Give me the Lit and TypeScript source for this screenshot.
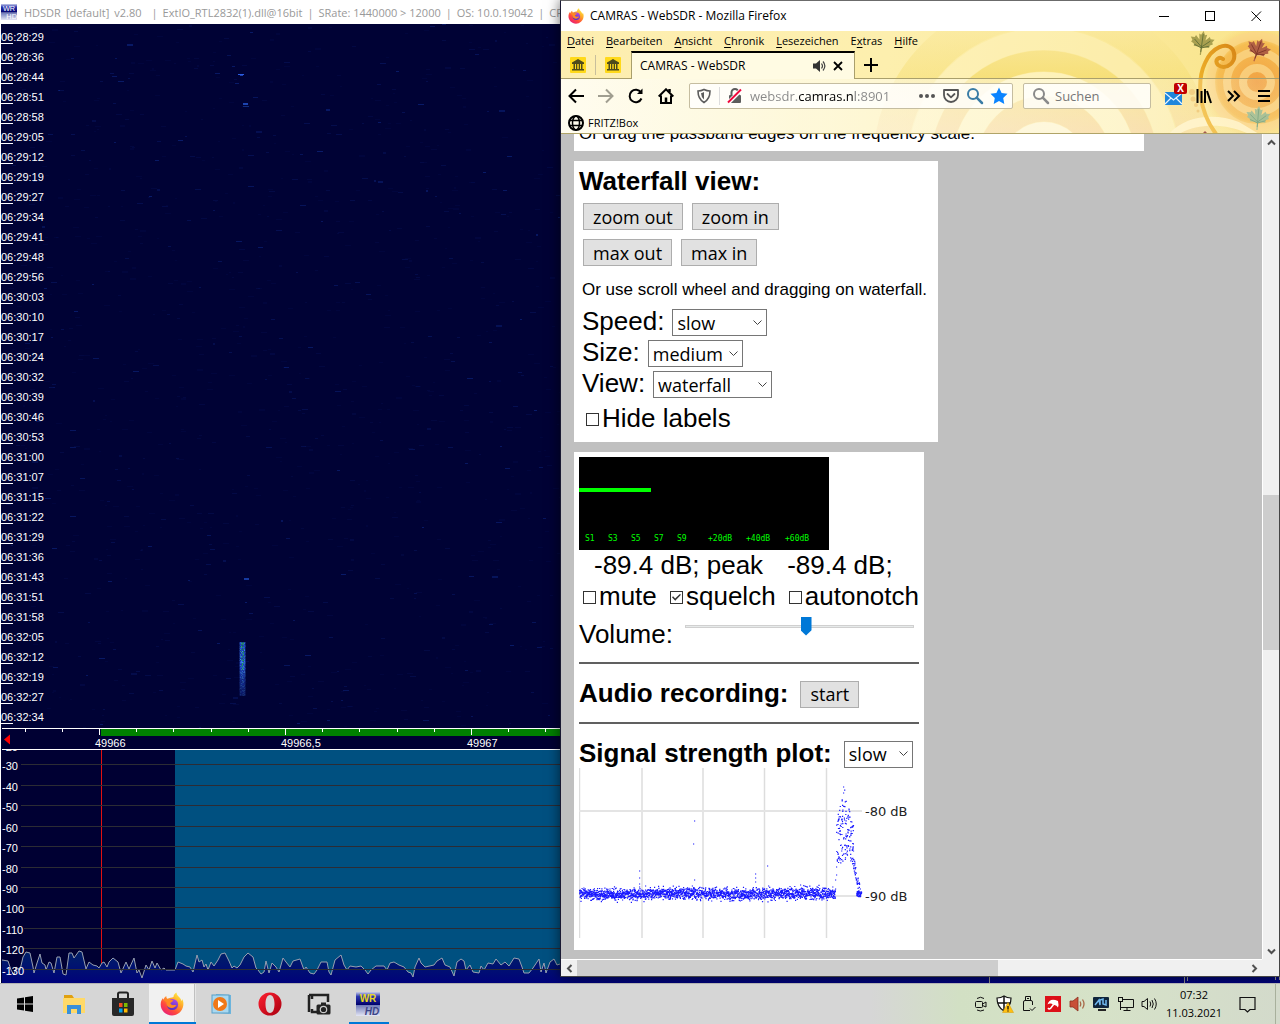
import { LitElement, html, svg, css } from "lit";
import { customElement } from "lit/decorators.js";

/** Small repeatable generator, so that the noise looks the same on each load. */
function seeded(seed: number) {
  let s = seed;
  return () => {
    s = (s * 1664525 + 1013904223) >>> 0;
    return s / 4294967296;
  };
}

const hdLogo = (size: number) => html`
  <svg width=${size} height=${size} viewBox="0 0 24 24" aria-hidden="true">
    <defs>
      <linearGradient id="hdTop" x1="0" y1="0" x2="0" y2="1">
        <stop offset="0" stop-color="#c8cde8" /><stop offset="0.35" stop-color="#2a35b0" /><stop offset="1" stop-color="#00006a" />
      </linearGradient>
      <linearGradient id="hdLow" x1="0" y1="0" x2="0" y2="1">
        <stop offset="0" stop-color="#6d78b8" /><stop offset="1" stop-color="#e4e6f4" />
      </linearGradient>
    </defs>
    <rect width="24" height="13" fill="url(#hdTop)" />
    <rect y="13" width="24" height="11" fill="url(#hdLow)" />
    <text x="12" y="10" text-anchor="middle" font-family="Liberation Sans, sans-serif" font-weight="bold" font-size="10" fill="#e8d820">WR</text>
    <text x="16" y="23" text-anchor="middle" font-family="Liberation Sans, sans-serif" font-weight="bold" font-style="italic" font-size="10" fill="#3c4488">HD</text>
  </svg>`;

const foxLogo = (size: number) => html`
  <svg width=${size} height=${size} viewBox="0 0 24 24" aria-hidden="true">
    <defs>
      <linearGradient id="foxBody" x1="0.85" y1="0.05" x2="0.2" y2="0.95">
        <stop offset="0" stop-color="#fff14a" /><stop offset="0.35" stop-color="#ffa828" />
        <stop offset="0.7" stop-color="#ff4a3c" /><stop offset="1" stop-color="#e81e78" />
      </linearGradient>
      <linearGradient id="foxGlobe" x1="0.7" y1="0" x2="0.3" y2="1">
        <stop offset="0" stop-color="#b04ae8" /><stop offset="1" stop-color="#4a30c0" />
      </linearGradient>
    </defs>
    <path d="M13.5 5C13.5 3 15 1 16.5.5c0 2.5 2 3.700 3.500 5.500.8.900 1.300 2 1.500 3 .6-.6.700-1.500.600-2.300C23.300 9 23.700 11 23.300 13.500 22.500 19.300 17.600 23.500 12 23.500 5.600 23.500.700 18.400.700 12.500c0-2.800 1-5 2.300-6.500 0 .8.200 1.400.5 1.800C4 6.200 5 4.700 6.300 4c-.1 1.200.3 2.200 1 2.800 2-.9 4.300-1 6.200-1.800z" fill="url(#foxBody)" />
    <circle cx="12.500" cy="12.500" r="5.600" fill="url(#foxGlobe)" />
    <path d="M3.500 8c2-1.500 4.500-1.300 6.500 0 1 .2 2.500 0 3.300.3-.3 1.500-2 1.900-3 2.700.3 1.700 2 2.500 4 2 1-.2 2 0 2.300.5-1.300.9-2.300 2.600-5 2.500-3.500-.1-5.500-2.800-5-5.500z" fill="#ff8a22" />
  </svg>`;

const glass = html`
  <svg width="18" height="18" viewBox="0 0 18 18" fill="none" stroke="currentColor" stroke-width="2" aria-hidden="true">
    <circle cx="7" cy="7" r="5" /><path d="M10.700 10.700 16 16" stroke-width="2.500" stroke-linecap="round" />
  </svg>`;

const museum = html`
  <svg width="16" height="16" viewBox="0 0 16 16" aria-hidden="true">
    <rect width="16" height="16" rx="1" fill="#ffd91a" />
    <path d="M8 2 14 5.500V7H2V5.500zM3.500 7h1.500v5H3.500zM6 7h1.300v5H6zM8.700 7H10v5H8.700zM11 7h1.500v5H11zM2 12h12v1.500H2z" fill="#4d4a1c" />
  </svg>`;

const MAPLE = "M0-12 2-8 4-9 3-3 7-7 8-5 12-5 10-2 11 0 7 2 8 4 3 4 .6 5V12H-.6V5L-3 4-8 4-7 2-11 0-10-2-12-5-8-5-7-7-3-3-4-9-2-8z";

const selectBox = (id: string, size: string, options: string[]) => html`
  <span class="select ${size}">
    <select id=${id}>${options.map((o) => html`<option>${o}</option>`)}</select>
    <svg width="9" height="6" viewBox="0 0 9 6" fill="none" stroke="#444" aria-hidden="true"><path d="M.5.5 4.500 4.500 8.500.5" /></svg>
  </span>`;

/* ------------------------------------------------------------------ */

const TIMES = (
  "28:29 28:36 28:44 28:51 28:58 29:05 29:12 29:19 29:27 29:34 29:41 29:48 29:56 30:03 30:10 30:17 30:24 30:32 " +
  "30:39 30:46 30:53 31:00 31:07 31:15 31:22 31:29 31:36 31:43 31:51 31:58 32:05 32:12 32:19 32:27 32:34"
).split(" ");

/** Spectrum trace: x, and height of the trace in the plot. */
const TRACE: number[][] = [
  [2, 140], [8, 141], [11, 150], [14, 155], [16, 147], [20, 150], [23, 137], [26, 132], [30, 133], [33, 147], [34, 153],
  [37, 143], [40, 134], [42, 143], [45, 145], [46, 150], [49, 142], [51, 143], [54, 153], [57, 137], [60, 137], [63, 154],
  [66, 155], [69, 133], [72, 133], [74, 138], [79, 131], [82, 132], [86, 149], [89, 142], [93, 145], [97, 146], [99, 148],
  [102, 143], [104, 142], [107, 147], [109, 142], [113, 138], [118, 142], [121, 153], [126, 142], [129, 149], [134, 138],
  [137, 153], [139, 150], [142, 158], [146, 145], [149, 150], [152, 141], [155, 148], [157, 143], [161, 150], [164, 148],
  [166, 150], [175, 150], [178, 142], [183, 144], [186, 146], [190, 147], [193, 152], [197, 135], [199, 142], [202, 140],
  [204, 147], [206, 144], [208, 150], [211, 142], [214, 146], [218, 140], [221, 134], [225, 133], [229, 141], [232, 148],
  [234, 146], [237, 148], [240, 145], [244, 137], [248, 133], [253, 137], [256, 148], [258, 150], [261, 154], [264, 152],
  [266, 141], [269, 153], [272, 143], [276, 147], [279, 152], [283, 138], [286, 142], [290, 147], [293, 141], [300, 139],
  [304, 150], [306, 147], [310, 153], [314, 154], [317, 150], [321, 142], [327, 142], [329, 152], [331, 155], [335, 140],
  [341, 135], [344, 145], [347, 150], [350, 146], [356, 147], [361, 146], [365, 150], [368, 154], [371, 150], [376, 146],
  [384, 146], [387, 150], [390, 143], [394, 142], [399, 145], [404, 147], [408, 152], [411, 153], [413, 157], [415, 147],
  [419, 138], [421, 143], [425, 147], [434, 145], [437, 141], [442, 138], [445, 145], [450, 147], [454, 156], [457, 142],
  [461, 139], [464, 141], [466, 150], [470, 145], [473, 152], [479, 153], [481, 146], [484, 150], [488, 143], [493, 144],
  [496, 139], [501, 145], [505, 142], [509, 146], [514, 138], [519, 139], [522, 147], [524, 153], [529, 153], [533, 148],
  [539, 139], [541, 152], [544, 143], [546, 153], [550, 142], [554, 139], [557, 145], [560, 144], [600, 146], [3000, 146],
];

@customElement("sdr-window")
class SdrWindow extends LitElement {
  static styles = css`
    :host { display: flex; flex-direction: column; min-width: 0; min-height: 0; background: #000033; border-left: 1px solid #fff; }
    .title { display: flex; flex: none; align-items: center; gap: 5px; height: 24px; background: #fff; color: #999;
      font: 11px "Open Sans", "Noto Sans", sans-serif; white-space: nowrap; overflow: hidden; }
    .title svg { margin-right: 2px; }
    .part { padding-left: 5px; }
    .fall { flex: 1; display: grid; min-height: 0; background: #000235; overflow: hidden; }
    .fall > * { grid-area: 1 / 1; }
    .noise { width: 100%; height: 100%; }
    .times { margin: 0; padding: 6px 0 0; list-style: none; color: #fff;
      font: 11px/15px "Liberation Sans", Arial, sans-serif; }
    .times li { display: flex; height: 20px; }
    .hour { height: 13px; border-bottom: 1px solid #fff; }
    .scale, .spectrum { display: block; width: 100%; flex: none; }
    text { fill: #fff; font: 11px "Liberation Sans", Arial, sans-serif; }
  `;

  private noise() {
    const rnd = seeded(77);
    const dashes = [];
    for (let i = 0; i < 2600; i++) {
      const bright = Math.pow(rnd(), 6);
      dashes.push(svg`<rect x=${Math.floor(rnd() * 1280)} y=${Math.floor(rnd() * 704)} width=${2 + Math.floor(rnd() * 5)}
        height=${rnd() > 0.9 ? 2 : 1} fill="#1848c8" opacity=${(0.06 + bright * 0.3).toFixed(2)} />`);
    }
    return dashes;
  }

  private burst() {
    const rnd = seeded(5);
    const cells = [];
    for (let y = 0; y < 54; y += 1) {
      const strength = y < 28 ? 1 : 0.8 - (y - 28) / 55;
      for (let x = 0; x < 7; x++) {
        const green = x > 1 && x < 5 && y < 28 && rnd() > 0.55;
        const edge = x === 0 || x === 6 ? 0.4 : 1;
        cells.push(svg`<rect x=${238 + x} y=${618 + y} width="1" height="1" fill=${green ? "#28b068" : rnd() > 0.6 ? "#4088f0" : "#2450d8"}
          opacity=${(strength * edge * (0.65 + rnd() * 0.35)).toFixed(2)} />`);
      }
    }
    return cells;
  }

  private ticks() {
    const marks = [];
    for (let i = -2; i < 32; i++) {
      const x = Math.round(98 + i * 37.2);
      marks.push(svg`<rect x=${x} y="1" width="1" height=${i % 5 === 0 ? 6 : 3} fill="#fff" />`);
    }
    return marks;
  }

  render() {
    const line = TRACE.map(([x, y]) => `${x - 1},${y}`).join(" ");
    return html`
      <header class="title">
        ${hdLogo(16)}<span>HDSDR</span><span>[default]</span><span>v2.80</span><span class="part">|</span><span>ExtIO_RTL2832(1).dll@16bit</span>
        <span>|</span><span>SRate: 1440000 &gt; 12000</span><span>|</span><span>OS: 10.0.19042</span><span>|</span><span>CPU</span>
      </header>
      <div class="fall">
        <svg class="noise" aria-hidden="true">
          ${this.noise()}${this.burst()}
          <rect x="237" y="50" width="6" height="1" fill="#2c5ce0" /><rect x="239" y="51" width="3" height="1" fill="#1c40b0" />
          <rect x="242" y="79" width="5" height="2" fill="#1c44b0" /><rect x="242" y="82" width="6" height="1" fill="#102c80" />
          <rect x="243" y="554" width="5" height="2" fill="#163aa0" />
        </svg>
        <ul class="times">${TIMES.map((t) => html`<li><span class="hour">06</span>:${t}</li>`)}</ul>
      </div>
      <svg class="scale" height="22" aria-label="Frequency scale in kHz">
        <rect x="100" y="1" width="100%" height="7" fill="#008000" />
        <rect x="1" width="100%" height="1" fill="#fff" /><rect x="1" y="21" width="100%" height="1" fill="#fff" />
        ${this.ticks()}
        <path d="M3 11.500 9 6.500V16.500z" fill="#f00" />
        <text x="94" y="19">49966</text><text x="280" y="19">49966,5</text><text x="466" y="19">49967</text>
      </svg>
      <svg class="spectrum" height="233" aria-label="Spectrum in dB">
        <defs>
          <linearGradient id="under" gradientUnits="userSpaceOnUse" x1="0" y1="130" x2="0" y2="165">
            <stop offset="0" stop-color="#002266" /><stop offset="1" stop-color="#00007c" />
          </linearGradient>
        </defs>
        <g>
          <rect x="174" width="100%" height="100%" fill="#005080" />
          <rect x="100" width="1" height="213" fill="#e01010" />
        </g>
        <g transform="translate(0 70)">
          <polygon points="1,170 ${line} 2999,170" fill="url(#under)" />
          <polyline points=${line} fill="none" stroke="#98a0b0" stroke-width="1" />
        </g>
        ${[14, 35, 55, 76, 96, 117, 137, 157, 178, 198, 219].map(
          (y, i) => svg`<rect x=${i < 7 ? 20 : 23} y=${y} width="100%" height="1" fill="#2c2c34" /><text x="1" y=${y + 6}>-${30 + i * 10}</text>`
        )}
        <text x="1" y="1">-20</text>
        <path d="M988.500 226V233M1183.500 227V233M1186.500 227V231M1274.500 227V230M1278.500 227V230" stroke="#909090" />
      </svg>`;
  }
}

/* ------------------------------------------------------------------ */

@customElement("receiver-page")
class ReceiverPage extends LitElement {
  static styles = css`
    :host { display: flex; flex-direction: column; align-items: flex-start; gap: 10px; min-width: 0; overflow: hidden;
      padding-left: 13px; background: #c0c0c0; color: #000; font: 26px/30px "Liberation Sans", Arial, sans-serif; }
    .panel { box-sizing: border-box; background: #fff; padding: 5px; white-space: nowrap; }
    .tail { width: 570px; max-width: 90%; margin-top: -18px; font-size: 17px; line-height: 25px; }
    .view { width: 364px; padding-bottom: 9px; }
    .audio { width: 350px; padding-bottom: 12px; }
    h2 { margin: 0; font-size: 26px; line-height: 30px; }
    .stack { display: flex; flex-direction: column; gap: 9px; padding: 7px 0 0 4px; }
    .buttons { display: flex; gap: 9px; }
    button, select { box-sizing: border-box; height: 27px; font: 18px/24px "Open Sans", "Noto Sans", sans-serif; color: #000; }
    button { padding: 0 9px; border: 1px solid #adadad; background: #e1e1e1; }
    .hint { margin: 14px 0 9px; padding-left: 3px; font-size: 17px; line-height: 20px; }
    .fields { display: flex; flex-direction: column; gap: 4px; padding-left: 3px; }
    .field { display: flex; gap: 8px; height: 27px; line-height: 25px; }
    .select { display: inline-grid; align-items: center; }
    .select > * { grid-area: 1 / 1; }
    .select svg { justify-self: end; margin-right: 5px; pointer-events: none; }
    select { appearance: none; width: 100%; border: 1px solid #767676; border-radius: 0; background: #fff; padding: 0 4px; }
    .w1 { width: 95px; } .w2 { width: 119px; } .w3 { width: 69px; }
    .check { display: inline-flex; align-items: center; gap: 3px; }
    input[type="checkbox"] { appearance: none; display: grid; place-items: center; width: 13px; height: 13px; margin: 4px 0 0;
      border: 1px solid #333; background: #fff; }
    input[type="checkbox"]:checked::before { content: ""; width: 9px; height: 7px; background: #333;
      clip-path: polygon(0 45%, 12% 32%, 35% 65%, 88% 0, 100% 12%, 36% 98%); }
    .labels { padding: 4px 0 0 7px; }
    .meter, .plot { display: block; }
    .reading { display: flex; gap: 24px; padding-left: 15px; height: 31px; }
    .checks { display: flex; justify-content: space-between; padding-left: 4px; height: 36px; align-items: flex-start; }
    .volume { display: flex; gap: 12px; line-height: 34px; align-items: flex-start; height: 45px; }
    .volume input { appearance: none; flex: 1; height: 19px; margin: 0 5px 0 0; background: none; }
    .volume input::-webkit-slider-runnable-track { height: 3px; background: #e7eaea; outline: 1px solid #d0d0d0; outline-offset: -1px; }
    .volume input::-webkit-slider-thumb { appearance: none; width: 11px; height: 19px; margin-top: -8px; background: #0078d7;
      clip-path: polygon(0 0, 100% 0, 100% 72%, 50% 100%, 0 72%); }
    hr { margin: 0; border: 0; height: 2px; background: #606060; }
    .line { display: flex; gap: 12px; align-items: flex-start; }
    .record { padding: 17px 0 14px; }
    .strength { padding-top: 17px; }
    .line h2 { line-height: 25px; }
    .meter text { fill: #0f0; font: 8px "DejaVu Sans Mono", monospace; }
    .plot text { fill: #222; font: 13px "DejaVu Sans", Verdana, sans-serif; }
  `;

  private dots() {
    const rnd = seeded(9);
    let d = "";
    const dot = (x: number, y: number) => { d += `M${x.toFixed(1)} ${y.toFixed(1)}h1.200`; };
    for (let x = 0; x < 256; x += 0.12) dot(x, 126 + (rnd() + rnd() + rnd() + rnd() - 2) * 5 + Math.sin(x / 20) * 0.5);
    for (let i = 0; i < 150; i++) {
      const x = 257 + rnd() * 17;
      const mid = 1 - Math.abs(x - 265) / 9;
      dot(x, 95 - rnd() * (38 + mid * 36));
    }
    for (let i = 0; i < 50; i++) { const t = rnd(); dot(273 + t * 8, 90 + t * 36 + (rnd() - 0.5) * 12); }
    for (let i = 0; i < 40; i++) dot(277 + rnd() * 5, 126 + (rnd() - 0.5) * 6);
    for (const [x, y] of [[115, 53], [114, 76], [60, 103], [60, 110], [60, 116], [60, 119], [115, 112], [188, 98], [176, 106],
      [176, 110], [176, 114], [221, 117], [189, 118], [66, 118], [264, 19], [264, 25], [256, 112], [257, 107], [257, 99]]) dot(x, y);
    return d;
  }

  render() {
    return html`
      <section class="panel tail">Or drag the passband edges on the frequency scale.</section>
      <section class="panel view">
        <h2>Waterfall view:</h2>
        <div class="stack">
          <div class="buttons"><button>zoom out</button><button>zoom in</button></div>
          <div class="buttons"><button>max out</button><button>max in</button></div>
        </div>
        <p class="hint">Or use scroll wheel and dragging on waterfall.</p>
        <div class="fields">
          <div class="field"><label for="speed">Speed:</label>${selectBox("speed", "w1", ["slow", "medium", "fast"])}</div>
          <div class="field"><label for="size">Size:</label>${selectBox("size", "w1", ["medium", "small", "large"])}</div>
          <div class="field"><label for="view">View:</label>${selectBox("view", "w2", ["waterfall", "spectrum"])}</div>
        </div>
        <div class="labels"><label class="check"><input type="checkbox" />Hide labels</label></div>
      </section>
      <section class="panel audio">
        <svg class="meter" width="250" height="93" viewBox="0 0 250 93" aria-label="Signal meter">
          <rect width="250" height="93" /><rect y="31" width="72" height="4" fill="#0f0" />
          ${([["S1", 6], ["S3", 29], ["S5", 52], ["S7", 75], ["S9", 98], ["+20dB", 129], ["+40dB", 167], ["+60dB", 206]] as [string, number][]).map(
            ([t, x]) => svg`<text x=${x} y="84">${t}</text>`
          )}
        </svg>
        <div class="reading"><span>-89.4 dB; peak</span><span>-89.4 dB;</span></div>
        <div class="checks">
          <label class="check"><input type="checkbox" />mute</label>
          <label class="check"><input type="checkbox" checked />squelch</label>
          <label class="check"><input type="checkbox" />autonotch</label>
        </div>
        <div class="volume"><label for="volume">Volume:</label><input id="volume" type="range" min="0" max="100" value="53" /></div>
        <hr />
        <div class="line record"><h2>Audio recording:</h2><button>start</button></div>
        <hr />
        <div class="line strength"><h2><label for="rate">Signal strength plot:</label></h2>${selectBox("rate", "w3", ["slow", "fast"])}</div>
        <svg class="plot" width="340" height="170" viewBox="0 0 340 170" aria-label="Signal strength over time">
          <path d="M.5 0V170M63 0V170M124 0V170M185.500 0V170M247.500 0V170" stroke="#ddd" stroke-width="1.500" />
          <path d="M0 43H283M0 128H283" stroke="#e4e4e4" stroke-width="2" />
          <path d=${this.dots()} stroke="#1a1aff" stroke-width="1.200" />
          <text x="286" y="48">-80 dB</text><text x="286" y="133">-90 dB</text>
        </svg>
      </section>`;
  }
}

/* ------------------------------------------------------------------ */

@customElement("browser-window")
class BrowserWindow extends LitElement {
  static styles = css`
    :host { display: flex; flex-direction: column; box-sizing: border-box; background: #fff; border: 1px solid #444;
      border-top-color: #6b6b6b; border-left-color: #1a1a33; box-shadow: 0 0 12px rgba(0, 0, 0, 0.6);
      font: 11px/16px "Open Sans", "Noto Sans", sans-serif; color: #000; }
    button { display: grid; place-items: center; padding: 0; border: 0; background: none; color: inherit; font: inherit; }
    .title { display: flex; align-items: center; height: 30px; padding-left: 7px; }
    .title .name { flex: 1; padding-left: 6px; }
    .name { font-size: 12px; white-space: nowrap; }
    .title button { width: 46px; height: 28px; }
    .chrome { position: relative; overflow: hidden; height: 102px; border-bottom: 1px solid #b0a468;
      background: linear-gradient(100deg, #fdeeb0, #fdefae 45%, #f9e48a); }
    .art { position: absolute; top: 0; right: 0; }
    .rows { position: relative; }
    .menu { display: flex; gap: 12px; height: 20px; padding-left: 6px; align-items: center; }
    .menu a { color: #000; text-decoration: none; }
    u { text-underline-offset: 2px; }
    .tabs { display: flex; height: 28px; }
    .pin, .rest { box-sizing: border-box; border-bottom: 1px solid #a99f6c; }
    .pin { width: 35px; display: flex; align-items: center; justify-content: space-between; padding-left: 9px; }
    .bar { width: 1px; height: 20px; background: #c8bf9c; }
    .tab { box-sizing: border-box; width: 224px; display: flex; align-items: center; gap: 4px; padding: 0 10px 0 8px;
      border: 1px solid #a99f6c; border-width: 0 1px; border-top: 2px solid #000; background: rgba(255, 254, 240, 0.8); }
    .tab .name { flex: 1; }
    .rest { flex: 1; padding-left: 6px; display: flex; align-items: center; }
    .rest button { width: 20px; height: 20px; }
    .lower { background: linear-gradient(90deg, rgba(255, 255, 250, 0.85), rgba(255, 253, 240, 0.55) 45%, rgba(255, 255, 255, 0.3) 80%, rgba(255, 255, 255, 0.1)); }
    .nav { display: flex; align-items: center; height: 34px; }
    .nav > button { width: 30px; height: 30px; }
    .url, .search { box-sizing: border-box; display: flex; align-items: center; height: 26px; border: 1px solid #c5bda0;
      border-radius: 2px; background: rgba(255, 255, 255, 0.8); }
    .url { flex: 1; margin: 0 10px 0 8px; padding: 0 4px 0 5px; gap: 6px; color: #5c5c5c; min-width: 0; }
    .url .bar { background: #ddd; height: 18px; }
    input { flex: 1; min-width: 0; border: 0; padding: 0; outline: 0; font: 13px/20px "Open Sans", "Noto Sans", sans-serif; background: none; }
    .address { color: transparent; background: linear-gradient(90deg, #888 48px, #000 48px 105px, #888 105px); background-clip: text; -webkit-background-clip: text; }
    .search { width: 128px; padding: 0 8px; gap: 5px; margin-right: 8px; color: #8a8a8a; }
    input::placeholder { color: #777; opacity: 1; }
    .blue { display: flex; color: #3a7ca5; }
    .marks { display: flex; align-items: center; gap: 4px; height: 20px; padding-left: 7px; }
    .mark { display: flex; align-items: center; gap: 4px; color: #000; text-decoration: none; }
    .body { flex: 1; min-height: 0; display: grid; grid-template: minmax(0, 1fr) 17px / minmax(0, 1fr) 17px; background: #f0f0f0; }
    .vbar, .hbar { display: flex; color: #505050; }
    .vbar { flex-direction: column; border-left: 1px solid #fff; }
    .hbar { border-top: 1px solid #fff; }
    .vbar button, .hbar button { width: 16px; height: 16px; }
    .thumb { background: #cdcdcd; }
    .vbar .before { flex: 345; } .vbar .thumb { flex: 155; } .vbar .after { flex: 293; }
    .hbar .thumb { flex: 420; } .hbar .after { flex: 248; }
  `;

  private leaf(x: number, y: number, turn: number, scale: number, fill: string, vein: string) {
    return svg`<g transform="translate(${x} ${y}) rotate(${turn}) scale(${scale})">
      <path d=${MAPLE} fill=${fill} /><path d="M0 9V-9M0 4 8-3M0 4-8-3M0 5 8 2M0 5-8 2" stroke=${vein} stroke-width="0.800" fill="none" /></g>`;
  }

  private art() {
    return html`
      <svg class="art" width="719" height="103" viewBox="561 31 719 103" aria-hidden="true">
        <defs>
          <linearGradient id="ring" gradientUnits="userSpaceOnUse" x1="0" y1="31" x2="0" y2="134">
            <stop offset="0" stop-color="#f9e79a" /><stop offset="0.450" stop-color="#f5dd70" /><stop offset="1" stop-color="#f6cf90" />
          </linearGradient>
          <radialGradient id="sun"><stop offset="0" stop-color="#f09a3c" /><stop offset="0.700" stop-color="#f5b84a" /><stop offset="1" stop-color="#fbe08a" stop-opacity="0.300" /></radialGradient>
          <linearGradient id="stem" x1="0" y1="1" x2="1" y2="0"><stop offset="0" stop-color="#f6c030" /><stop offset="1" stop-color="#d88818" /></linearGradient>
        </defs>
        <g fill="none" stroke="url(#ring)">
          <circle cx="1045" cy="164" r="154" stroke-width="34" opacity="0.500" />
          <circle cx="1045" cy="164" r="103" stroke-width="21" opacity="0.800" />
          <circle cx="1045" cy="164" r="55" stroke-width="25" opacity="0.800" />
        </g>
        <circle cx="1045" cy="164" r="125" fill="none" stroke="#fff6cc" stroke-width="22" opacity="0.350" />
        <circle cx="1045" cy="164" r="80" fill="none" stroke="#fff6cc" stroke-width="24" opacity="0.600" />
        <circle cx="1045" cy="164" r="42" fill="#fff6dc" opacity="0.700" />
        <circle cx="1258" cy="82" r="56" fill="url(#sun)" opacity="0.900" />
        <g fill="none" stroke="#fbd88a" stroke-width="8" opacity="0.750">
          <circle cx="1258" cy="82" r="46" /><circle cx="1258" cy="82" r="30" /><circle cx="1258" cy="82" r="14" />
        </g>
        <path d="M1170 134C1185 116 1215 112 1240 122L1260 134H1250C1230 124 1200 122 1180 134z" fill="#fff2c0" opacity="0.900" />
        <g fill="#eec060"><circle cx="1193" cy="92" r="3" /><circle cx="1194" cy="99" r="2.500" /><circle cx="1197" cy="105" r="2" /><circle cx="1199" cy="111" r="1.500" /></g>
        <path d="M1217 134C1199 110 1198 80 1206 63 1213 47 1228 41 1234 50 1239 62 1227 71 1219 65 1215 60 1220 56 1224 59" fill="none" stroke="url(#stem)" stroke-width="4" stroke-linecap="round" />
        ${this.leaf(1203, 43, 8, 1, "#a9a050", "#5c6a34")}
        ${this.leaf(1259, 50, 20, 1, "#b06044", "#7c3428")}
        ${this.leaf(1259, 118, 5, 1, "#9db888", "#6c9a70")}
        <path d="M1203 134 1206 131 1209 134z" fill="#8c3020" />
      </svg>`;
  }

  render() {
    return html`
      <header class="title">
        ${foxLogo(16)}<span class="name">CAMRAS - WebSDR - Mozilla Firefox</span>
        <button aria-label="Minimize"><svg width="11" height="11" stroke="#000"><path d="M0 5.500H10" /></svg></button>
        <button aria-label="Maximize"><svg width="11" height="11" stroke="#000" fill="none"><rect x=".5" y=".5" width="9" height="9" /></svg></button>
        <button aria-label="Close"><svg width="11" height="11" stroke="#000"><path d="M.5.5 10 10M10 .5.5 10" /></svg></button>
      </header>
      <div class="chrome">
        ${this.art()}
        <div class="rows">
          <nav class="menu">
            <a href="#"><u>D</u>atei</a><a href="#"><u>B</u>earbeiten</a><a href="#"><u>A</u>nsicht</a><a href="#"><u>C</u>hronik</a>
            <a href="#"><u>L</u>esezeichen</a><a href="#">E<u>x</u>tras</a><a href="#"><u>H</u>ilfe</a>
          </nav>
          <div class="tabs">
            <div class="pin">${museum}<span class="bar"></span></div>
            <div class="pin">${museum}</div>
            <div class="tab">
              <span class="name">CAMRAS - WebSDR</span>
              <button aria-label="Mute tab"><svg width="16" height="14" viewBox="0 0 16 14"><path d="M1 4.500H4L8 1V13L4 9.500H1z" fill="#333" /><path d="M9.500 4.500Q11.500 7 9.500 9.500M11 2.500Q14.700 7 11 11.500" fill="none" stroke="#444" stroke-width="1.200" /></svg></button>
              <button aria-label="Close tab"><svg width="12" height="12" stroke="#000" stroke-width="1.800"><path d="M2 2 10 10M10 2 2 10" /></svg></button>
            </div>
            <div class="rest"><button aria-label="New tab"><svg width="14" height="14" stroke="#000" stroke-width="2"><path d="M7 0V14M0 7H14" /></svg></button></div>
          </div>
          <div class="lower">
            <div class="nav">
              <button aria-label="Back"><svg width="16" height="16" fill="none" stroke="#000" stroke-width="2"><path d="M16 8H2M8 1.500 1.500 8 8 14.500" /></svg></button>
              <button aria-label="Forward"><svg width="16" height="16" fill="none" stroke="#a09e90" stroke-width="2"><path d="M0 8H14M8 1.500 14.500 8 8 14.500" /></svg></button>
              <button aria-label="Reload"><svg width="16" height="16" viewBox="0 0 16 16" fill="none" stroke="#000" stroke-width="2"><path d="M13.500 10.500A6.200 6.200 0 1 1 13 4.500" /><path d="M14.500.5V6H9z" fill="#000" stroke="none" /></svg></button>
              <button aria-label="Home"><svg width="16" height="16" viewBox="0 0 16 16" fill="none" stroke="#000" stroke-width="2"><path d="M.7 8.500 8 1.300 15.300 8.500M3 7.500V15H13V7.500" /><path d="M8 9.500V15M11.500 1V4" stroke-width="2.500" /></svg></button>
              <div class="url">
                <svg width="18" height="18" viewBox="0 0 18 18" fill="none" stroke="currentColor" stroke-width="1.600"><path d="M9 2.500Q12 4 15 4 15 12 9 15.500 3 12 3 4 6 4 9 2.500z" /><path d="M9 5Q7.500 6 6 6.200 6.300 10.500 9 12.500z" fill="currentColor" stroke="none" /></svg>
                <span class="bar"></span>
                <svg width="18" height="18" viewBox="0 0 18 18"><path d="M5.500 8V5.500a3.500 3.500 0 0 1 7 0V8" fill="none" stroke="#5c5c5c" stroke-width="2" /><rect x="3" y="8" width="12" height="8" rx="1" fill="#5c5c5c" /><path d="M2.500 15.500 15.500 2.500" stroke="#fff" stroke-width="4" /><path d="M2 15.500 15 2.500" stroke="#f0083c" stroke-width="2" /></svg>
                <input class="address" aria-label="Address" value="websdr.camras.nl:8901" />
                <svg width="18" height="18" fill="#555"><circle cx="3" cy="9" r="2" /><circle cx="9" cy="9" r="2" /><circle cx="15" cy="9" r="2" /></svg>
                <svg width="18" height="18" viewBox="0 0 18 18" fill="none" stroke="#555" stroke-width="1.800" stroke-linecap="round"><path d="M2 3H16V8A7 7 0 0 1 2 8z" stroke-linejoin="round" /><path d="M5.500 7 9 10.300 12.500 7" /></svg>
                <span class="blue">${glass}</span>
                <svg width="18" height="18" viewBox="0 0 18 18"><path d="M9 .5 11.600 6 17.500 6.800 13.200 11 14.300 17 9 14 3.700 17 4.800 11 .5 6.800 6.400 6z" fill="#0a84ff" /></svg>
              </div>
              <div class="search">${glass}<input aria-label="Search" placeholder="Suchen" /></div>
              <button aria-label="Mail"><svg width="26" height="26" viewBox="0 0 26 26"><rect x="4" y="9" width="17" height="13" fill="#1f86dc" /><path d="M4 10 12.500 17 21 10M4 21 10 15M21 21 15 15" fill="none" stroke="#e8f4ff" stroke-width="1.200" /><rect x="13" y="0" width="13" height="11" rx="2" fill="#c00000" /><text x="19.500" y="9" text-anchor="middle" fill="#fff" font-family="Open Sans, sans-serif" font-weight="bold" font-size="10">X</text></svg></button>
              <button aria-label="Library"><svg width="16" height="16" fill="none" stroke="#000" stroke-width="2"><path d="M1.500 1V15M5.500 3V15M9 1V15M11 3 15 15" /></svg></button>
              <button aria-label="More tools"><svg width="16" height="16" fill="none" stroke="#000" stroke-width="2"><path d="M2 3 7 8 2 13M8 3 13 8 8 13" /></svg></button>
              <button aria-label="Menu"><svg width="16" height="16" stroke="#000" stroke-width="2"><path d="M2 3H14M2 8H14M2 13H14" /></svg></button>
            </div>
            <div class="marks">
              <a class="mark" href="#"><svg width="16" height="16" viewBox="0 0 16 16" fill="none" stroke="#000" stroke-width="1.500"><circle cx="8" cy="8" r="7" stroke-width="2" /><ellipse cx="8" cy="8" rx="3.500" ry="7" /><path d="M1.500 5.500H14.500M1.500 10.500H14.500" /></svg>FRITZ!Box</a>
            </div>
          </div>
        </div>
      </div>
      <div class="body">
        <receiver-page></receiver-page>
        <div class="vbar">
          <button aria-label="Scroll up"><svg width="9" height="7" fill="none" stroke="currentColor" stroke-width="2"><path d="M1 5.500 4.500 2 8 5.500" /></svg></button>
          <span class="before"></span><span class="thumb"></span><span class="after"></span>
          <button aria-label="Scroll down"><svg width="9" height="7" fill="none" stroke="currentColor" stroke-width="2"><path d="M1 1.500 4.500 5 8 1.500" /></svg></button>
        </div>
        <div class="hbar">
          <button aria-label="Scroll left"><svg width="7" height="9" fill="none" stroke="currentColor" stroke-width="2"><path d="M5.500 1 2 4.500 5.500 8" /></svg></button>
          <span class="thumb"></span><span class="after"></span>
          <button aria-label="Scroll right"><svg width="7" height="9" fill="none" stroke="currentColor" stroke-width="2"><path d="M1.500 1 5 4.500 1.500 8" /></svg></button>
        </div>
      </div>`;
  }
}

/* ------------------------------------------------------------------ */

@customElement("task-bar")
class TaskBar extends LitElement {
  static styles = css`
    :host { display: flex; align-items: stretch; height: 40px; border-top: 1px solid #b4b4b4; color: #000;
      background: linear-gradient(90deg, #d6d6d6 68%, #d2e0c4 75%, #d6e2c8 86%, #d3dacb);
      font: 11px/18px "Open Sans", "Noto Sans", sans-serif; }
    button { position: relative; display: grid; place-items: center; padding: 0; border: 0; background: none; font: inherit; }
    .apps { display: flex; flex: 1; }
    .apps button { width: 49px; }
    .active { background: linear-gradient(90deg, #f1f1f1 45px, #c0c0c0 45px 46px, #e6e6e6 46px) 2px 0 / 48px 100% no-repeat !important; }
    .active::after, .open::after { content: ""; position: absolute; bottom: 0; left: 2px; right: 0; height: 2px; background: #0078d7; }
    .open::after { left: 6px; right: 3px; }
    .tray { display: flex; align-items: center; }
    .tray button { width: 24px; height: 24px; }
    .clock { width: 66px; text-align: center; }
    .tray .note { width: 40px; }
    .peek { width: 4px; margin-left: 8px; border-left: 1px solid #a8b09c; align-self: stretch; }
  `;

  render() {
    return html`
      <div class="apps">
        <button aria-label="Start"><svg width="16" height="16"><path d="M0 2.500 7 1.500V7.500H0zM8 1.300 16 0V7.500H8zM0 8.500H7V14.500L0 13.500zM8 8.500H16V16L8 14.700z" /></svg></button>
        <button aria-label="Explorer"><svg width="24" height="22" viewBox="0 0 24 22"><path d="M2 2H10L12 5H22V20H2z" fill="#e0a010" /><path d="M1 5H23V20H1z" fill="#ffd968" /><path d="M5 21V12H19V21H15V16H9V21z" fill="#3a90d8" /></svg></button>
        <button aria-label="Store"><svg width="24" height="26" viewBox="0 0 24 26"><path d="M7 8V3Q7 1.500 8.500 1.500H15.500Q17 1.500 17 3V8" fill="none" stroke="#222" stroke-width="2" /><path d="M1 7H23V23Q23 25 21 25H3Q1 25 1 23z" fill="#282828" /><path d="M8 12h3.500v4H8z" fill="#f25022" /><path d="M13 12h3.500v4H13z" fill="#7fba00" /><path d="M8 17.500h3.500v4H8z" fill="#00a4ef" /><path d="M13 17.500h3.500v4H13z" fill="#ffb900" /></svg></button>
        <button class="active" aria-label="Firefox">${foxLogo(24)}</button>
        <button aria-label="Media Player"><svg width="24" height="24" viewBox="0 0 24 24"><path d="M7 2 22 3V22L7 21z" fill="#6cb4dc" /><rect x="3" y="3" width="17" height="18" fill="#a8d8f0" stroke="#5aa0c8" /><circle cx="11" cy="12" r="7" fill="#f07818" /><path d="M9 8 15 12 9 16z" fill="#fff" /></svg></button>
        <button aria-label="Opera"><svg width="24" height="24" viewBox="0 0 24 24"><defs><linearGradient id="op" x1="0" y1="0" x2="1" y2="1"><stop offset="0" stop-color="#ff2030" /><stop offset="1" stop-color="#a80010" /></linearGradient></defs><path d="M12 .5A11.500 11.500 0 1 0 12 23.500 11.500 11.500 0 1 0 12 .5zM12 3C15 3 16.500 7 16.500 12S15 21 12 21 7.500 17 7.500 12 9 3 12 3z" fill="url(#op)" fill-rule="evenodd" /></svg></button>
        <button aria-label="Screenshot tool"><svg width="24" height="24" viewBox="0 0 24 24"><path d="M10 20H5V17M2 20V3M2 3H21V10M5 7V3" fill="none" stroke="#222" stroke-width="2.500" /><rect x="9.500" y="12.500" width="14" height="10" rx="1.500" fill="#222" /><rect x="14" y="10.500" width="5" height="3" fill="#222" /><circle cx="16.500" cy="17.500" r="3.200" fill="none" stroke="#ccc" stroke-width="1.200" /></svg></button>
        <button class="open" aria-label="HDSDR">${hdLogo(24)}</button>
      </div>
      <div class="tray">
        <button aria-label="Camera"><svg width="14" height="16" viewBox="0 0 14 16" fill="none" stroke="#111"><rect x="1.500" y="5.500" width="7" height="6" rx="1" /><path d="M8.500 8 12 6V11L8.500 9.500M3 2.500Q6.500 0 10 2.500M3 14Q6.500 16 10 14" /></svg></button>
        <button aria-label="Security"><svg width="18" height="18" viewBox="0 0 18 18"><path d="M8 1Q11 3 15 3 15 12 8 16 1 12 1 3 5 3 8 1z" fill="#fff" stroke="#111" stroke-width="1.200" /><path d="M8 1V16M1.500 8H14.500" stroke="#111" stroke-width="1.500" /><path d="M12 7.500 17.500 17.500H6.500z" fill="#ffc010" stroke="#d89800" stroke-width=".5" /><path d="M12 11V14.500M12 15.500V16.500" stroke="#111" stroke-width="1.300" /></svg></button>
        <button aria-label="Remove hardware"><svg width="14" height="18" viewBox="0 0 14 18" fill="none" stroke="#111"><path d="M3.500 5.500V1.500H8.500V5.500M8 15.500H1.500V7Q1.500 5.500 3 5.500H9Q10.500 5.500 10.500 7V10M5 3.500H7M8 13.500 10 15.500 13.500 12" /></svg></button>
        <button aria-label="Antivirus"><svg width="16" height="16" viewBox="0 0 16 16"><rect width="16" height="16" fill="#dc1018" /><path d="M2.500 8.500Q4.500 1.500 13 5 14 9 13 11.500 11.500 8.500 8.500 9 5.500 6.500 2.500 8.500z" fill="#fff" /><path d="M8.500 8.500 5.500 12.500Q4 13.500 3 12" fill="none" stroke="#fff" stroke-width="1.500" /></svg></button>
        <button aria-label="Audio manager"><svg width="17" height="16" viewBox="0 0 17 16"><path d="M1 5H4L9 1V15L4 11H1z" fill="#c85038" stroke="#8c3020" stroke-width=".8" /><path d="M11 5.500Q12.500 8 11 10.500M13.500 3.500Q16.500 8 13.500 12.500" fill="none" stroke="#a86848" stroke-width="1.300" /></svg></button>
        <button aria-label="Display"><svg width="16" height="14" viewBox="0 0 16 14"><rect width="16" height="11" rx="1" fill="#10243c" /><path d="M2 8 6 3 7 8V3L10 2V7L13 8V3" fill="none" stroke="#70b8f0" stroke-width="1.500" /><path d="M5 12H13V14H5z" fill="#222" /></svg></button>
        <button aria-label="Network"><svg width="17" height="16" viewBox="0 0 17 16" fill="none" stroke="#111"><path d="M5.500 3.500H16.500V11.500H3.500V7M10 11.500V14.500M6.500 14.500H13.500" /><rect x="1.500" y="1.500" width="4" height="4" /><path d="M3.500 5.500V14" /></svg></button>
        <button aria-label="Volume"><svg width="17" height="14" viewBox="0 0 17 14" fill="none" stroke="#111"><path d="M1 4.500H3L6.500 1.500V12.500L3 9.500H1zM9 4.500Q10.500 7 9 9.500M11 3Q13.500 7 11 11M13.500 1.500Q17 7 13.500 12.500" /></svg></button>
        <div class="clock">07:32<br />11.03.2021</div>
        <button class="note" aria-label="Notifications"><svg width="17" height="17" viewBox="0 0 17 17" fill="none" stroke="#111" stroke-width="1.200"><path d="M1 1.500H16V13.500H11L8.500 16 6 13.500H1z" /></svg></button>
        <span class="peek"></span>
      </div>`;
  }
}

@customElement("app-root")
class AppRoot extends LitElement {
  static styles = css`
    :host { display: grid; grid-template: minmax(0, 1fr) auto / minmax(0, 1fr); height: 100vh; overflow: hidden; }
    .desktop { position: relative; display: grid; grid-template: minmax(0, 1fr) / minmax(0, 1fr); min-height: 0; overflow: hidden; }
    .front { position: absolute; top: 0; right: 0; bottom: 6px; left: 43.75%; }
  `;

  render() {
    return html`
      <main class="desktop">
        <sdr-window></sdr-window>
        <browser-window class="front"></browser-window>
      </main>
      <task-bar></task-bar>`;
  }
}
